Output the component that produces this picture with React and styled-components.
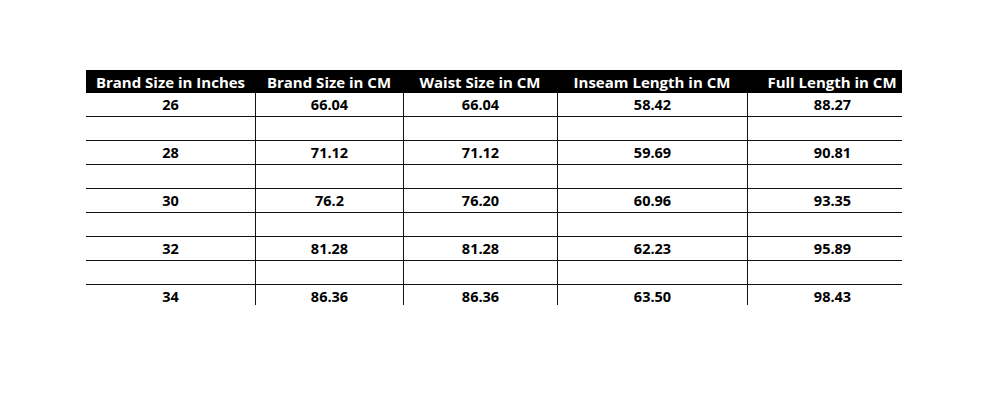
import React from 'react';
import styled, { createGlobalStyle } from 'styled-components';

const GlobalStyle = createGlobalStyle`
  html, body {
    margin: 0;
    padding: 0;
    background: #fff;
  }
  body {
    font-family: "Open Sans", Lato, "Liberation Sans", sans-serif;
  }
`;

const columns = [
  'Brand Size in Inches',
  'Brand Size in CM',
  'Waist Size in CM',
  'Inseam Length in CM',
  'Full Length in CM',
];

const rows = [
  ['26', '66.04', '66.04', '58.42', '88.27'],
  null,
  ['28', '71.12', '71.12', '59.69', '90.81'],
  null,
  ['30', '76.2', '76.20', '60.96', '93.35'],
  null,
  ['32', '81.28', '81.28', '62.23', '95.89'],
  null,
  ['34', '86.36', '86.36', '63.50', '98.43'],
];

const Page = styled.div`
  width: 1000px;
  height: 400px;
  padding: 70px 0 0 86px;
  box-sizing: border-box;
`;

const Clip = styled.div`
  height: 235px;
  overflow: hidden;
`;

const Grid = styled.div`
  display: grid;
  grid-template-columns: 169px 148px 154px 190px 155px;
  width: 816px;
`;

const HeadCell = styled.div`
  height: 23px;
  box-sizing: border-box;
  padding-left: ${p => (p.$last ? '15px' : '0')};
  background: #000;
  color: #fff;
  font-weight: 700;
  font-size: 15px;
  display: flex;
  align-items: center;
  justify-content: center;
  white-space: nowrap;
`;

const Cell = styled.div`
  height: 23px;
  padding-left: ${p => (p.$last ? '15px' : '0')};
  border-bottom: 1px solid #111;
  border-left: ${p => (p.$first ? 'none' : '1px solid #111')};
  color: #000;
  font-weight: 700;
  font-size: 14.5px;
  display: flex;
  align-items: center;
  justify-content: center;
`;

export default function App() {
  const last = columns.length - 1;
  return (
    <Page>
      <GlobalStyle />
      <Clip>
        <Grid>
          {columns.map((c, j) => (
            <HeadCell key={c} $last={j === last}>{c}</HeadCell>
          ))}
          {rows.map((r, i) =>
            columns.map((c, j) => (
              <Cell key={`${i}-${j}`} $first={j === 0} $last={j === last}>
                {r ? r[j] : ''}
              </Cell>
            )),
          )}
        </Grid>
      </Clip>
    </Page>
  );
}
